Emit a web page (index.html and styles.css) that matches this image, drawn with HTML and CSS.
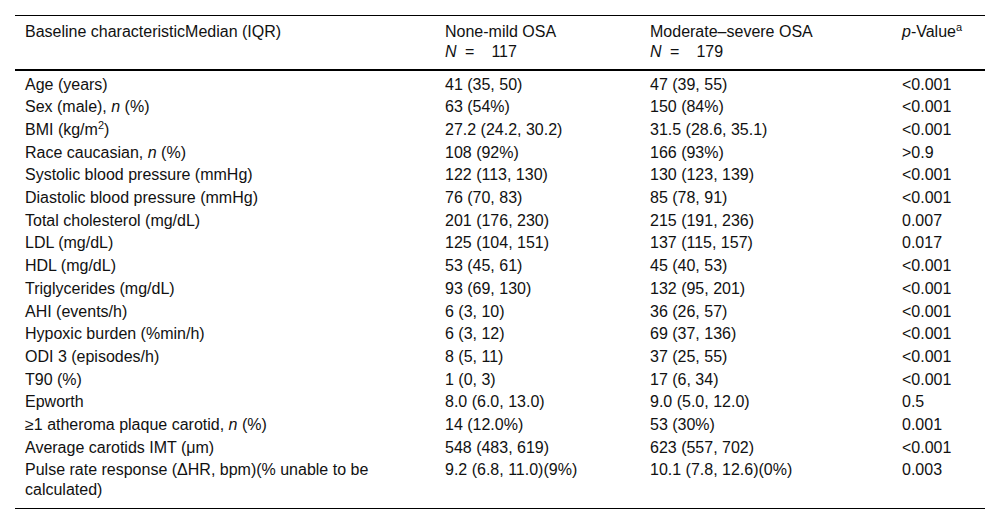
FILE: index.html
```html
<!DOCTYPE html>
<html>
<head>
<meta charset="utf-8">
<link rel="stylesheet" href="styles.css">
</head>
<body>
<div class="wrap">
<table class="tbl">
<colgroup>
<col class="c1"><col class="c2"><col class="c3"><col class="c4">
</colgroup>
<thead>
<tr>
<th>Baseline characteristicMedian (IQR)</th>
<th>None-mild OSA<br><i>N</i><span class="eq">=</span>117</th>
<th>Moderate–severe OSA<br><i>N</i><span class="eq">=</span>179</th>
<th><i>p</i>-Value<sup>a</sup></th>
</tr>
</thead>
<tbody>
<tr class="first"><td>Age (years)</td><td>41 (35, 50)</td><td>47 (39, 55)</td><td>&lt;0.001</td></tr>
<tr><td>Sex (male), <i>n</i> (%)</td><td>63 (54%)</td><td>150 (84%)</td><td>&lt;0.001</td></tr>
<tr><td>BMI (kg/m<sup>2</sup>)</td><td>27.2 (24.2, 30.2)</td><td>31.5 (28.6, 35.1)</td><td>&lt;0.001</td></tr>
<tr><td>Race caucasian, <i>n</i> (%)</td><td>108 (92%)</td><td>166 (93%)</td><td>&gt;0.9</td></tr>
<tr><td>Systolic blood pressure (mmHg)</td><td>122 (113, 130)</td><td>130 (123, 139)</td><td>&lt;0.001</td></tr>
<tr><td>Diastolic blood pressure (mmHg)</td><td>76 (70, 83)</td><td>85 (78, 91)</td><td>&lt;0.001</td></tr>
<tr><td>Total cholesterol (mg/dL)</td><td>201 (176, 230)</td><td>215 (191, 236)</td><td>0.007</td></tr>
<tr><td>LDL (mg/dL)</td><td>125 (104, 151)</td><td>137 (115, 157)</td><td>0.017</td></tr>
<tr><td>HDL (mg/dL)</td><td>53 (45, 61)</td><td>45 (40, 53)</td><td>&lt;0.001</td></tr>
<tr><td>Triglycerides (mg/dL)</td><td>93 (69, 130)</td><td>132 (95, 201)</td><td>&lt;0.001</td></tr>
<tr><td>AHI (events/h)</td><td>6 (3, 10)</td><td>36 (26, 57)</td><td>&lt;0.001</td></tr>
<tr><td>Hypoxic burden (%min/h)</td><td>6 (3, 12)</td><td>69 (37, 136)</td><td>&lt;0.001</td></tr>
<tr><td>ODI 3 (episodes/h)</td><td>8 (5, 11)</td><td>37 (25, 55)</td><td>&lt;0.001</td></tr>
<tr><td>T90 (%)</td><td>1 (0, 3)</td><td>17 (6, 34)</td><td>&lt;0.001</td></tr>
<tr><td>Epworth</td><td>8.0 (6.0, 13.0)</td><td>9.0 (5.0, 12.0)</td><td>0.5</td></tr>
<tr><td>≥1 atheroma plaque carotid, <i>n</i> (%)</td><td>14 (12.0%)</td><td>53 (30%)</td><td>0.001</td></tr>
<tr><td>Average carotids IMT (μm)</td><td>548 (483, 619)</td><td>623 (557, 702)</td><td>&lt;0.001</td></tr>
<tr class="last"><td>Pulse rate response (ΔHR, bpm)(% unable to be calculated)</td><td>9.2 (6.8, 11.0)(9%)</td><td>10.1 (7.8, 12.6)(0%)</td><td>0.003</td></tr>
</tbody>
</table>
</div>
</body>
</html>
```
FILE: styles.css
```css
html, body {
  margin: 0;
  padding: 0;
  background: #fff;
}
.wrap {
  padding: 15px 15px 0 15px;
}
.tbl {
  width: 970px;
  border-collapse: collapse;
  table-layout: fixed;
  font-family: "Liberation Sans", Arial, sans-serif;
  font-size: 16px;
  color: #111;
  border-top: 1px solid #000;
  border-bottom: 1px solid #000;
}
.c1 { width: 420px; }
.c2 { width: 205px; }
.c3 { width: 252px; }
.c4 { width: 93px; }
th, td {
  text-align: left;
  vertical-align: top;
  font-weight: normal;
  line-height: 19.2px;
  padding: 1.75px 10px 1.75px 10px;
}
thead th {
  line-height: 20px;
  padding-top: 6px;
  padding-bottom: 6.5px;
  border-bottom: 2px solid #000;
}
.eq {
  display: inline-block;
  margin: 0 17px 0 8.5px;
}
sup {
  font-size: 11px;
  line-height: 0;
  vertical-align: 6px;
}
tr.first td {
  padding-top: 4px;
}
tr.last td {
  padding-bottom: 9px;
}
```
